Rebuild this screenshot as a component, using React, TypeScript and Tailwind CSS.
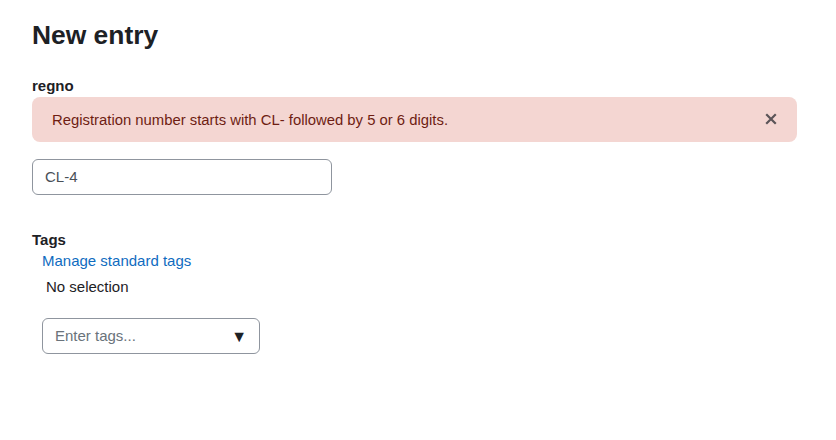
import React from "react";

export default function App() {
  return (
    <div className="min-h-[440px] w-[836px] bg-white text-[#1d2125] font-['Liberation_Sans',Arial,sans-serif] text-[15px] leading-[1.5] px-8 pt-[20px]">
      <h2 className="text-[26.4px] font-bold leading-[1.2] mb-[23px]">New entry</h2>
      <div className="font-bold leading-[22px]">regno</div>
      <div className="flex items-center justify-between rounded-lg bg-[#f4d6d2] text-[#6e1d12] pl-5 pr-5 pt-[2px] h-[45px] w-[765px]">
        <span className="text-[14.85px]">Registration number starts with CL- followed by 5 or 6 digits.</span>
        <svg width="12" height="12" viewBox="0 0 12 12" className="text-[#5b5458] -mt-[2px]">
          <path d="M2 2 L10 10 M10 2 L2 10" stroke="currentColor" strokeWidth="2.2" strokeLinecap="square" />
        </svg>
      </div>
      <div className="mt-[17px] w-[300px] h-[36px] rounded-md border border-[#8f959e] flex items-center px-3 pt-[2px] text-[#495057]">
        CL-4
      </div>
      <div className="mt-[34px] font-bold leading-[22px]">Tags</div>
      <div className="pl-[10px]">
        <a className="block text-[#0f6cbf] leading-[24px] -mt-[2px]">Manage standard tags</a>
        <div className="pl-[4px] mt-[2px] leading-[24px]">No selection</div>
        <div className="mt-[19px] w-[218px] h-[36px] rounded-md border border-[#8f959e] flex items-center justify-between pl-3 pr-[12px] pt-[2px]">
          <span className="text-[#6a737b]">Enter tags...</span>
          <span className="text-[#1d2125] text-[16px]">▼</span>
        </div>
      </div>
    </div>
  );
}
